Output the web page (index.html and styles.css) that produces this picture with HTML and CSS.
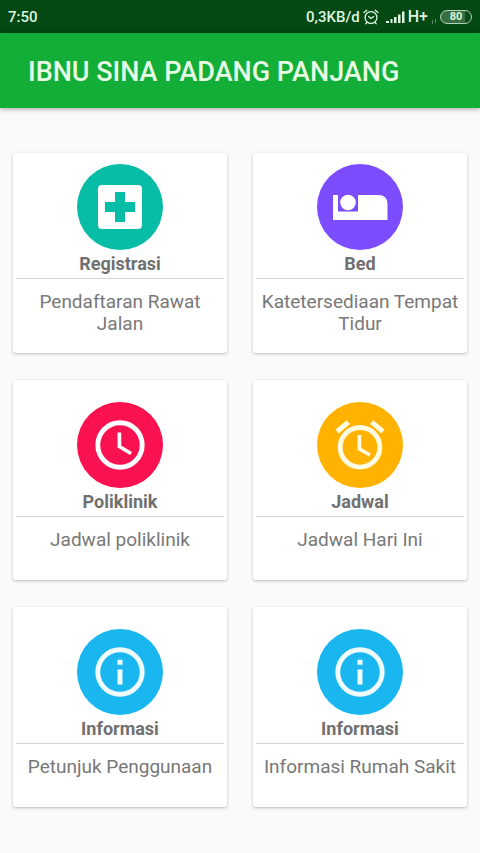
FILE: index.html
```html
<!DOCTYPE html>
<html lang="id">
<head>
<meta charset="utf-8">
<meta name="viewport" content="width=device-width, initial-scale=1">
<title>Ibnu Sina Padang Panjang</title>
<link rel="stylesheet" href="styles.css">
</head>
<body>
<div class="status">
  <span class="status-time">7:50</span>
  <div class="status-info">
    <span>0,3KB/d</span>
    <svg class="status-alarm" width="16" height="16" viewBox="0 0 16 16" fill="none" stroke="currentColor" stroke-width="1.3" stroke-linecap="round" aria-hidden="true"><circle cx="8" cy="8.5" r="5.9"/><path d="M1 3.6 3.8 1.2M15 3.6 12.2 1.2M5.6 7.4 8 9.4l2.6-2M4 13.2 2.8 14.8M12 13.2l1.2 1.6"/></svg>
    <svg class="status-signal" width="19" height="14" viewBox="0 0 19 14" fill="currentColor" aria-hidden="true"><path d="M0 11h3v2H0zM4.500 9h2v4h-2zM8 7h2.500v6H8zM12 4.500h2.500V13H12zM16 1.500h2.500V13H16z"/></svg>
    <span class="network">H+</span>
    <svg class="status-data" width="6" height="6" viewBox="0 0 6 6" stroke="currentColor" aria-hidden="true"><path d="M1.500 2v4M4.500 1v4"/></svg>
    <span class="battery">80</span>
  </div>
</div>
<header class="appbar"><h1>IBNU SINA PADANG PANJANG</h1></header>
<main class="menu">
  <a class="card" href="#registrasi">
    <svg class="icon teal" viewBox="0 0 86 86" aria-hidden="true"><circle class="disc" cx="43" cy="43" r="43"/><path fill="#fff" fill-rule="evenodd" d="M25 21h36a4 4 0 0 1 4 4v36a4 4 0 0 1-4 4H25a4 4 0 0 1-4-4V25a4 4 0 0 1 4-4zM38 28v10H28v10h10v10h10V48h10V38H48V28z"/></svg>
    <h2>Registrasi</h2>
    <p>Pendaftaran Rawat Jalan</p>
  </a>
  <a class="card" href="#bed">
    <svg class="icon purple" viewBox="0 0 86 86" aria-hidden="true"><circle class="disc" cx="43" cy="43" r="43"/><path fill="#fff" d="M16 31h5v16.500h20V31h20q9.500 0 9.500 9v16H16z"/><circle fill="#fff" cx="31" cy="38.500" r="7.800"/></svg>
    <h2>Bed</h2>
    <p>Katetersediaan Tempat Tidur</p>
  </a>
  <a class="card" href="#poliklinik">
    <svg class="icon red" viewBox="0 0 86 86" aria-hidden="true"><circle class="disc" cx="43" cy="43" r="43"/><g fill="none" stroke="#fff"><circle cx="43" cy="43" r="22.200" stroke-width="4.900"/><path stroke-width="3.700" d="M42.400 30.500v14L54 51.500"/></g></svg>
    <h2>Poliklinik</h2>
    <p>Jadwal poliklinik</p>
  </a>
  <a class="card" href="#jadwal">
    <svg class="icon amber" viewBox="0 0 86 86" aria-hidden="true"><circle class="disc" cx="43" cy="43" r="43"/><g fill="none" stroke="#fffbe0"><circle cx="43" cy="45.300" r="19.800" stroke-width="4.900"/><path stroke-width="3.700" d="M42.400 33v14L53 53"/><path stroke-width="4.900" d="M20 29.500 31.300 20.200M66 29.500 54.700 20.200"/></g></svg>
    <h2>Jadwal</h2>
    <p>Jadwal Hari Ini</p>
  </a>
  <a class="card" href="#petunjuk">
    <svg class="icon blue" viewBox="0 0 86 86" aria-hidden="true"><circle class="disc" cx="43" cy="43" r="43"/><circle cx="43" cy="43" r="22.200" fill="none" stroke="#f0fdff" stroke-width="4.900"/><path fill="#f0fdff" d="M40.500 30.700h5v5h-5zM40.500 40.500h5v15h-5z"/></svg>
    <h2>Informasi</h2>
    <p>Petunjuk Penggunaan</p>
  </a>
  <a class="card" href="#rumah-sakit">
    <svg class="icon blue" viewBox="0 0 86 86" aria-hidden="true"><circle class="disc" cx="43" cy="43" r="43"/><circle cx="43" cy="43" r="22.200" fill="none" stroke="#f0fdff" stroke-width="4.900"/><path fill="#f0fdff" d="M40.500 30.700h5v5h-5zM40.500 40.500h5v15h-5z"/></svg>
    <h2>Informasi</h2>
    <p>Informasi Rumah Sakit</p>
  </a>
</main>
</body>
</html>
```
FILE: styles.css
```css
* {
  box-sizing: border-box;
}

body {
  margin: 0;
  background: #fafafa;
  font-family: Roboto, "Liberation Sans", sans-serif;
}

.status {
  display: flex;
  justify-content: space-between;
  align-items: center;
  height: 33px;
  padding: 0 8px;
  background: #044813;
  color: #dcf5de;
  font-size: 15px;
  font-weight: 500;
}

.status-info {
  display: flex;
  align-items: center;
  gap: 3px;
}

.status-signal {
  margin-left: 4px;
}

.network {
  font-size: 16px;
}

.status-data {
  margin-top: 8px;
  opacity: 0.4;
}

.battery {
  width: 32px;
  border: 1px solid #b5d2b8;
  border-radius: 7px;
  background: linear-gradient(90deg, #386f42 80%, #0b4d19 80%);
  font-size: 11px;
  font-weight: 700;
  line-height: 12px;
  text-align: center;
}

.appbar {
  padding: 21px 28px 18px;
  background: #13ae38;
  box-shadow: 0 1px 5px rgba(0, 0, 0, 0.35);
  color: #e6fbe4;
}

.appbar h1 {
  margin: 0;
  font-size: 27px;
  font-weight: 500;
  line-height: 36px;
}

.menu {
  display: grid;
  grid-template-columns: 1fr 1fr;
  gap: 27px 26px;
  padding: 45px 13px;
}

.card {
  display: flex;
  flex-direction: column;
  justify-content: center;
  min-height: 200px;
  padding: 0 3px;
  border-radius: 3px;
  background: #fff;
  box-shadow: 0 1px 3px rgba(0, 0, 0, 0.26);
  color: #787878;
  text-align: center;
  text-decoration: none;
}

.icon {
  width: 86px;
  height: 86px;
  margin: 0 auto;
}

.disc {
  fill: currentColor;
}

.teal {
  color: #07bda5;
}

.purple {
  color: #7c4dff;
}

.red {
  color: #fa114f;
}

.amber {
  color: #ffb300;
}

.blue {
  color: #19b6f0;
}

.card h2 {
  margin: 0;
  border-bottom: 1px solid #d3d3d3;
  color: #707070;
  font-size: 18px;
  font-weight: 700;
  line-height: 28px;
}

.card p {
  margin: 0;
  padding: 12px 4px 8px;
  font-size: 19px;
  line-height: 22px;
}
```
